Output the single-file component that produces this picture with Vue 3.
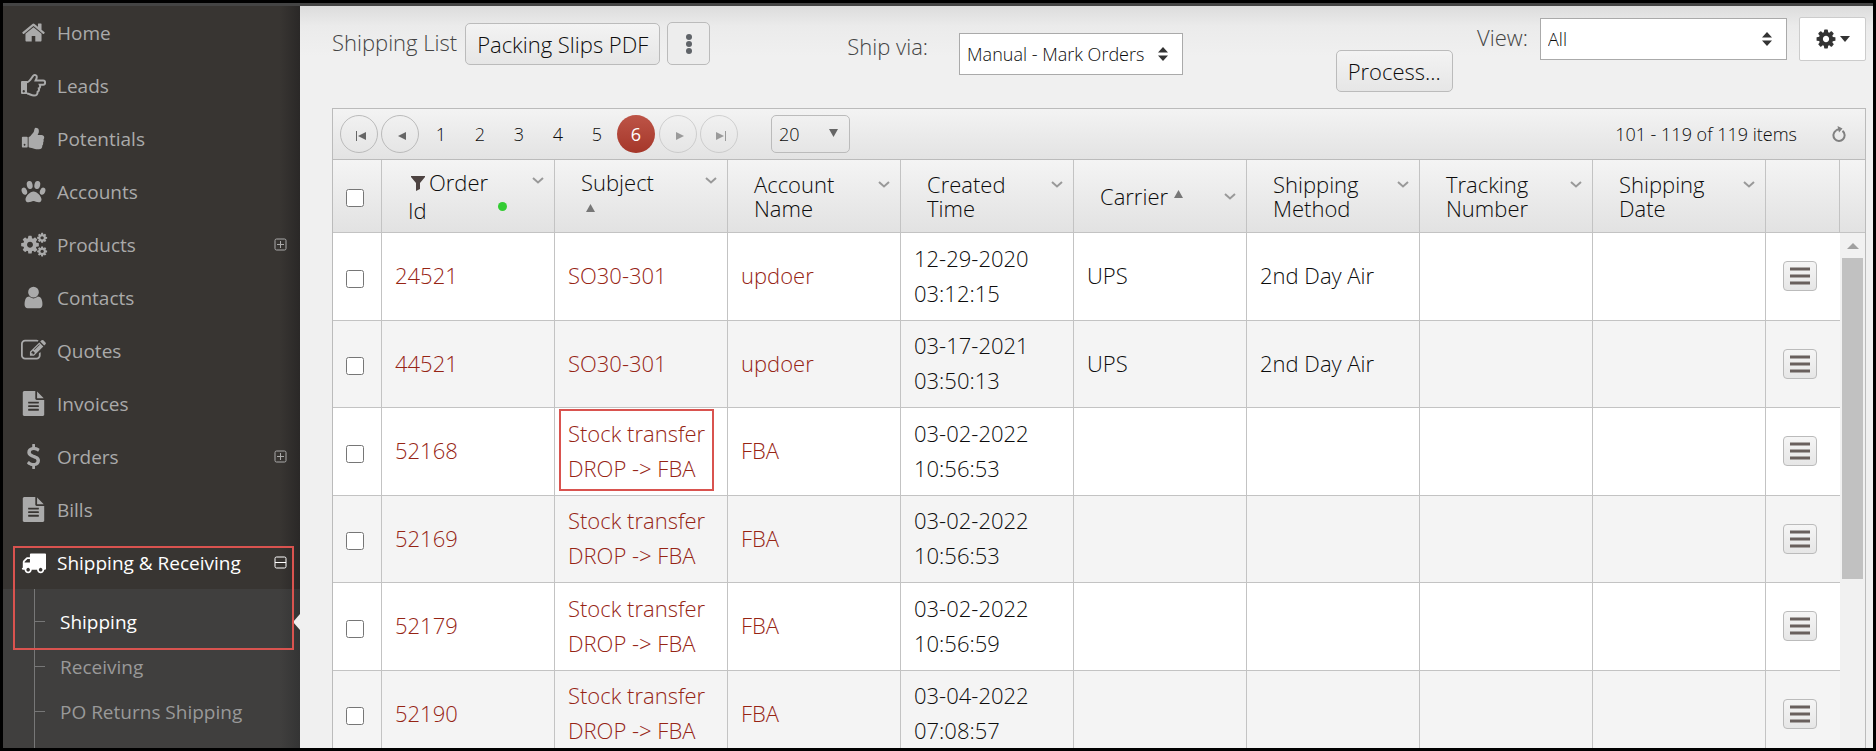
<script setup>
import { ref } from 'vue'

const icons = {
  home: 'M1472 992v480q0 26-19 45t-45 19h-384v-384h-256v384h-384q-26 0-45-19t-19-45v-480q0-1 .5-3t.5-3l575-474 575 474q1 2 1 6zm223-69l-62 74q-8 9-21 11h-3q-13 0-21-7l-692-577-692 577q-12 8-24 7-13-2-21-11l-62-74q-8-10-7-23.5t11-21.5l719-599q32-26 76-26t76 26l244 204v-195q0-14 9-23t23-9h192q14 0 23 9t9 23v408l219 182q10 8 11 21.5t-7 23.5z',
  thumb: 'M320 1344q0-26-19-45t-45-19q-27 0-45.5 19t-18.5 45q0 27 18.5 45.5t45.5 18.5q26 0 45-18.5t19-45.5zm160-512v640q0 26-19 45t-45 19h-288q-26 0-45-19t-19-45v-640q0-26 19-45t45-19h288q26 0 45 19t19 45zm1184 0q0 86-55 149 15 44 15 76 3 76-43 137 17 56 0 117-15 57-54 94 9 112-49 181-64 76-197 78h-129q-66 0-144-15.5t-121.5-29-120.5-39.5q-123-43-158-44-26-1-45-19.5t-19-44.5v-641q0-25 18-43.5t43-20.5q24-2 76-59t101-121q68-87 101-120 18-18 31-48t17.5-48.5 13.5-60.5q7-39 12.5-61t19.5-52 34-50q19-19 45-19 46 0 82.5 10.5t60 26 40 40.5 24 45 12 50 5 45 .5 39q0 38-9.5 76t-19 60-27.5 56q-3 6-10 18t-11 22-8 24h277q78 0 135 57t57 135z',
  user: 'M1536 1399q0 109-62.5 187t-150.5 78h-854q-88 0-150.5-78t-62.5-187q0-85 8.5-160.5t31.5-152 58.5-131 94-89 134.5-34.5q131 128 313 128t313-128q76 0 134.5 34.5t94 89 58.5 131 31.5 152 8.5 160.5zm-256-887q0 159-112.5 271.5t-271.5 112.5-271.5-112.5-112.5-271.5 112.5-271.5 271.5-112.5 271.5 112.5 112.5 271.5z',
  edit: 'M888 1184l116-116-152-152-116 116v56h96v96h56zm440-720q-16-16-33 1l-350 350q-17 17-1 33t33-1l350-350q17-17 1-33zm80 594v190q0 119-84.5 203.5t-203.5 84.5h-832q-119 0-203.5-84.5t-84.5-203.5v-832q0-119 84.5-203.5t203.5-84.5h832q63 0 117 25 15 7 18 23 3 17-9 29l-49 49q-14 14-32 8-23-6-45-6h-832q-66 0-113 47t-47 113v832q0 66 47 113t113 47h832q66 0 113-47t47-113v-126q0-13 9-22l64-64q15-15 35-7t20 29zm-96-738l288 288-672 672h-288v-288zm444 132l-92 92-288-288 92-92q28-28 68-28t68 28l152 152q28 28 28 68t-28 68z',
  file: 'M1596 476q14 14 28 36h-472v-472q22 14 36 28zm-476 164h544v1056q0 40-28 68t-68 28h-1344q-40 0-68-28t-28-68v-1600q0-40 28-68t68-28h800v544q0 40 28 68t68 28zm160 736v-64q0-14-9-23t-23-9h-704q-14 0-23 9t-9 23v64q0 14 9 23t23 9h704q14 0 23-9t9-23zm0-256v-64q0-14-9-23t-23-9h-704q-14 0-23 9t-9 23v64q0 14 9 23t23 9h704q14 0 23-9t9-23zm0-256v-64q0-14-9-23t-23-9h-704q-14 0-23 9t-9 23v64q0 14 9 23t23 9h704q14 0 23-9t9-23z',
  dollar: 'M1362 1185q0 153-99.5 263.5t-258.5 136.5v175q0 14-9 23t-23 9h-135q-13 0-22.5-9.5t-9.5-22.5v-175q-66-9-127.5-31t-101.5-44.5-74-48-46.5-37.5-17.5-18q-17-21-2-41l103-135q7-10 23-12 15-2 24 9l2 2q113 99 243 125 37 8 74 8 81 0 142.5-43t61.5-122q0-28-15-53t-33.5-42-58.5-37.5-66-32-80-32.5q-39-16-61.5-25t-61.5-26.5-62.5-31-56.5-35.5-53.5-42.5-43.5-49-35.5-58-21-66.5-8.5-78q0-138 98-242t255-134v-180q0-13 9.5-22.5t22.5-9.5h135q14 0 23 9t9 23v176q57 6 110.5 23t87 33.5 63.5 37.5 39 29 15 14q17 18 5 38l-81 146q-8 15-23 16-14 3-27-7-3-3-14.5-12t-39-26.5-58.5-32-74.5-26-85.5-11.5q-95 0-155 43t-60 111q0 26 8.5 48t29.5 41.5 39.5 33 56 31 60.5 27 70 27.5q53 20 81 31.5t76 35 75.5 42.5 62 50 53 63.5 31.5 76.5 13 94z',
  truck: 'M640 1408q0-52-38-90t-90-38-90 38-38 90 38 90 90 38 90-38 38-90zm-384-512h384v-256h-158q-13 0-22 9l-195 195q-9 9-9 22v30zm1280 512q0-52-38-90t-90-38-90 38-38 90 38 90 90 38 90-38 38-90zm256-1088v1024q0 15-4 26.5t-13.5 18.5-16.5 11.5-23.5 6-22.5 2-25.5 0-22.5-.5q0 106-75 181t-181 75-181-75-75-181h-384q0 106-75 181t-181 75-181-75-75-181h-64q-3 0-22.5.5t-25.5 0-22.5-2-23.5-6-16.5-11.5-13.5-18.5-4-26.5q0-26 19-45t45-19v-320q0-8-.5-35t0-38 2.5-34.5 6.5-37 14-30.5 22.5-30l198-198q19-19 50.5-32t58.5-13h160v-192q0-26 19-45t45-19h1024q26 0 45 19t19 45z',
  cog: 'M1152 896q0-106-75-181t-181-75-181 75-75 181 75 181 181 75 181-75 75-181zm512-109v222q0 12-8 23t-20 13l-185 28q-19 54-39 91 35 50 107 138 10 12 10 25t-9 23q-27 37-99 108t-94 71q-12 0-26-9l-138-108q-44 23-91 38-16 136-29 186-7 28-36 28h-222q-14 0-24.5-8.5t-11.5-21.5l-28-184q-49-16-90-37l-141 107q-10 9-25 9-14 0-25-11-126-114-165-168-7-10-7-23 0-12 8-23 15-21 51-66.5t54-70.5q-27-50-41-99l-183-27q-13-2-21-12.5t-8-23.5v-222q0-12 8-23t19-13l186-28q14-46 39-92-40-57-107-138-10-12-10-24 0-10 9-23 26-36 98.5-107.5t94.5-71.5q13 0 26 10l138 107q44-23 91-38 16-136 29-186 7-28 36-28h222q14 0 24.5 8.5t11.5 21.5l28 184q49 16 90 37l142-107q9-9 24-9 13 0 25 10 129 119 165 170 7 8 7 22 0 12-8 23-15 21-51 66.5t-54 70.5q26 50 41 98l183 28q13 2 21 12.5t8 23.5z',
}

const menu = [
  { label: 'Home', icon: 'home' },
  { label: 'Leads', icon: 'hand' },
  { label: 'Potentials', icon: 'thumb' },
  { label: 'Accounts', icon: 'paw' },
  { label: 'Products', icon: 'cogs', toggle: 'plus' },
  { label: 'Contacts', icon: 'user' },
  { label: 'Quotes', icon: 'edit' },
  { label: 'Invoices', icon: 'file' },
  { label: 'Orders', icon: 'dollar', toggle: 'plus' },
  { label: 'Bills', icon: 'file' },
  { label: 'Shipping & Receiving', icon: 'truck', toggle: 'minus', active: true },
]

const submenu = ['Shipping', 'Receiving', 'PO Returns Shipping']
const activeSub = ref('Shipping')

const columns = [
  { label: 'Order Id', filter: true },
  { label: 'Subject', sorted: true },
  { label: 'Account Name' },
  { label: 'Created Time' },
  { label: 'Carrier', sorted: true },
  { label: 'Shipping Method' },
  { label: 'Tracking Number' },
  { label: 'Shipping Date' },
]

const rows = [
  { id: '24521', subject: 'SO30-301', account: 'updoer', created: '12-29-2020 03:12:15', carrier: 'UPS', method: '2nd Day Air' },
  { id: '44521', subject: 'SO30-301', account: 'updoer', created: '03-17-2021 03:50:13', carrier: 'UPS', method: '2nd Day Air' },
  { id: '52168', subject: 'Stock transfer DROP -> FBA', account: 'FBA', created: '03-02-2022 10:56:53', marked: true },
  { id: '52169', subject: 'Stock transfer DROP -> FBA', account: 'FBA', created: '03-02-2022 10:56:53' },
  { id: '52179', subject: 'Stock transfer DROP -> FBA', account: 'FBA', created: '03-02-2022 10:56:59' },
  { id: '52190', subject: 'Stock transfer DROP -> FBA', account: 'FBA', created: '03-04-2022 07:08:57' },
]

const page = ref(6)
const selected = ref([])

function toggleAll(event) {
  selected.value = event.target.checked ? rows.map((row) => row.id) : []
}
</script>

<template>
  <div class="app">
    <nav class="sidebar">
      <ul class="menu">
        <li v-for="item in menu" :key="item.label">
          <a href="#" class="menu-link" :class="{ active: item.active }">
            <svg v-if="item.icon === 'hand'" class="menu-icon" viewBox="0 0 25 25">
              <path fill="currentColor" fill-rule="evenodd" d="M1 8h5v13H1a1 1 0 0 1-1-1V9a1 1 0 0 1 1-1zm1.700 9a1.200 1.200 0 1 0 .1 0z" />
              <path fill="none" stroke="currentColor" stroke-width="2" d="M6 9.200C9 9 10.500 4.500 12.600 2.400c1-1 3.200-.3 3.200 1.500 0 1.600-.9 2.700-1.200 3.500H22.300c2.400 0 2.400 4.400 0 4.400H18.800c.7 1.500.3 3-1 3.600.5 1.500 0 2.800-1.200 3.400.1 2.500-1 3.700-3.600 3.700-3 0-4.500-1.900-7-1.900" />
            </svg>
            <svg v-else-if="item.icon === 'paw'" class="menu-icon" viewBox="0 0 25 25" fill="currentColor">
              <ellipse cx="8.700" cy="6" rx="2.900" ry="4" transform="rotate(-12 8.700 6)" />
              <ellipse cx="16.300" cy="6" rx="2.900" ry="4" transform="rotate(12 16.300 6)" />
              <ellipse cx="3.400" cy="12.200" rx="2.600" ry="3.700" transform="rotate(-22 3.400 12.200)" />
              <ellipse cx="21.600" cy="12.200" rx="2.600" ry="3.700" transform="rotate(22 21.600 12.200)" />
              <path d="M12.500 12.500c3.500 0 8 4.800 8 8 0 2.200-1.400 2.800-3 2.800-2 0-3.200-1.300-5-1.300s-3 1.300-5 1.300c-1.600 0-3-.6-3-2.800 0-3.200 4.500-8 8-8z" />
            </svg>
            <svg v-else-if="item.icon === 'cogs'" class="menu-icon wide" viewBox="0 0 27 25" fill="currentColor">
              <path :d="icons.cog" transform="translate(-1.300 2.400) scale(0.0115)" />
              <path :d="icons.cog" transform="translate(15.300 0) scale(0.0065)" />
              <path :d="icons.cog" transform="translate(15.300 13.600) scale(0.0065)" />
            </svg>
            <svg v-else class="menu-icon" viewBox="0 0 1792 1792" fill="currentColor">
              <path :d="icons[item.icon]" />
            </svg>
            <span class="menu-label">{{ item.label }}</span>
            <svg v-if="item.toggle" class="menu-toggle" viewBox="0 0 13 13" fill="none" stroke="currentColor">
              <rect x="1" y="1" width="11" height="11" rx="1.500" />
              <path :d="item.toggle === 'plus' ? 'M3 6.500h7M6.500 3v7' : 'M1 6.500h11'" />
            </svg>
          </a>
        </li>
      </ul>
      <ul class="submenu">
        <li v-for="sub in submenu" :key="sub" :class="{ current: sub === activeSub }">
          <a href="#" @click.prevent="activeSub = sub">{{ sub }}</a>
        </li>
      </ul>
      <div class="mark mark-menu"></div>
    </nav>

    <main class="content">
      <header class="toolbar">
        <div class="group title-group">
          <span class="title">Shipping List</span>
          <button type="button" class="btn">Packing Slips PDF</button>
          <button type="button" class="btn btn-dots" aria-label="More">
            <svg width="6" height="20" viewBox="0 0 6 20" fill="#5f6368">
              <circle cx="3" cy="3" r="3" />
              <circle cx="3" cy="10" r="3" />
              <circle cx="3" cy="17" r="3" />
            </svg>
          </button>
        </div>
        <div class="group ship-group">
          <label for="ship-via">Ship via:</label>
          <div class="select-box ship-select">
            <select id="ship-via">
              <option>Manual - Mark Orders</option>
            </select>
            <svg class="updown" viewBox="0 0 10 14"><path d="M5 0l5 5.500H0zM5 14l5-5.500H0z" fill="#333" /></svg>
          </div>
        </div>
        <div class="group process-group">
          <button type="button" class="btn">Process...</button>
        </div>
        <div class="group view-group">
          <label for="view">View:</label>
          <div class="select-box view-select">
            <select id="view">
              <option>All</option>
            </select>
            <svg class="updown" viewBox="0 0 10 14"><path d="M5 0l5 5.500H0zM5 14l5-5.500H0z" fill="#333" /></svg>
          </div>
          <button type="button" class="btn-gear" aria-label="Settings">
            <svg width="22" height="22" viewBox="0 0 1792 1792" fill="#333"><path :d="icons.cog" /></svg>
            <svg width="10" height="6" viewBox="0 0 10 6" fill="#333"><path d="M0 0h10L5 6z" /></svg>
          </button>
        </div>
      </header>

      <section class="grid">
        <div class="pager">
          <button type="button" class="nav-btn" aria-label="First page">
            <svg width="10" height="10" viewBox="0 0 10 10" fill="#666"><path d="M0 0h1v10H0zM10 1v8L2 5z" /></svg>
          </button>
          <button type="button" class="nav-btn" aria-label="Previous page">
            <svg width="10" height="10" viewBox="0 0 10 10" fill="#666"><path d="M9 1v8L1 5z" /></svg>
          </button>
          <button
            v-for="n in 6"
            :key="n"
            type="button"
            class="page-btn"
            :class="{ current: n === page }"
            @click="page = n"
          >
            {{ n }}
          </button>
          <button type="button" class="nav-btn" disabled aria-label="Next page">
            <svg width="10" height="10" viewBox="0 0 10 10" fill="#666"><path d="M1 1v8l8-4z" /></svg>
          </button>
          <button type="button" class="nav-btn" disabled aria-label="Last page">
            <svg width="10" height="10" viewBox="0 0 10 10" fill="#666"><path d="M9 0h1v10H9zM0 1v8l8-4z" /></svg>
          </button>
          <div class="size-box">
            <select aria-label="Items per page">
              <option>20</option>
            </select>
            <svg class="size-arrow" viewBox="0 0 9 8"><path d="M0 0h9L4.500 8z" fill="#666" /></svg>
          </div>
          <span class="pager-info">101 - 119 of 119 items</span>
          <button type="button" class="refresh" aria-label="Refresh">
            <svg width="14" height="16" viewBox="0 0 14 16">
              <path d="M4 4.600A5.600 5.600 0 1 0 10.500 4.900" fill="none" stroke="#808080" stroke-width="2" />
              <path d="M5.500 0l5 2.500-3.500 4z" fill="#808080" />
              <path d="M4 4.600Q5 3.400 7.500 3.200" fill="none" stroke="#808080" stroke-width="2" />
            </svg>
          </button>
        </div>

        <div class="grid-body">
          <div class="table-wrap">
            <table>
              <colgroup>
                <col class="col-check" />
                <col v-for="col in columns" :key="col.label" />
                <col class="col-action" />
              </colgroup>
              <thead>
                <tr>
                  <th class="check">
                    <input type="checkbox" aria-label="Select all" @change="toggleAll" />
                  </th>
                  <th v-for="col in columns" :key="col.label">
                    <div class="head" :class="{ loose: col.filter || col.label === 'Subject' }">
                      <span class="head-label">
                        <svg v-if="col.filter" class="filter" viewBox="0 0 14 15" fill="#4d4341">
                          <path d="M0 0h14v1L9 7v6l-4 2V7L0 1z" />
                        </svg>{{ col.label }}
                        <svg v-if="col.sorted" class="sort" viewBox="0 0 9 8"><path d="M0 8h9L4.500 0z" fill="#777" /></svg>
                      </span>
                      <svg class="chevron" viewBox="0 0 12 7" fill="none" stroke="#999" stroke-width="2">
                        <path d="M1 1l5 4.500L11 1" />
                      </svg>
                      <span v-if="col.filter" class="dot"></span>
                    </div>
                  </th>
                  <th></th>
                </tr>
              </thead>
              <tbody>
                <tr v-for="row in rows" :key="row.id">
                  <td class="check">
                    <input v-model="selected" type="checkbox" :value="row.id" :aria-label="row.id" />
                  </td>
                  <td><a href="#">{{ row.id }}</a></td>
                  <td class="subject">
                    <a href="#">{{ row.subject }}</a>
                    <div v-if="row.marked" class="mark mark-cell"></div>
                  </td>
                  <td><a href="#">{{ row.account }}</a></td>
                  <td>{{ row.created }}</td>
                  <td>{{ row.carrier }}</td>
                  <td>{{ row.method }}</td>
                  <td></td>
                  <td></td>
                  <td class="action">
                    <button type="button" class="row-btn" aria-label="Row menu">
                      <svg width="20" height="18" viewBox="0 0 20 18" stroke="#69605d" stroke-width="3">
                        <path d="M0 2h20M0 9h20M0 16h20" />
                      </svg>
                    </button>
                  </td>
                </tr>
              </tbody>
            </table>
          </div>
          <div class="gutter">
            <div class="gutter-head"></div>
            <div class="track">
              <svg class="track-arrow" viewBox="0 0 12 6" fill="#a0a0a0"><path d="M6 0l6 6H0z" /></svg>
              <div class="thumb"></div>
            </div>
          </div>
        </div>
      </section>
    </main>
  </div>
</template>

<style>
body {
  margin: 0;
  background: #000;
}
</style>

<style scoped>
.app {
  display: flex;
  box-sizing: border-box;
  height: 100vh;
  border: 3px solid #000;
  overflow: hidden;
  font-family: 'Open Sans', 'Noto Sans', sans-serif;
  font-size: 22px;
  color: #0c0c0c;
  background: #efefef;
}

.app * {
  box-sizing: border-box;
}

button,
select {
  font-family: inherit;
  font-weight: inherit;
  color: inherit;
}

a {
  color: #962414;
  text-decoration: none;
}

/* sidebar */
.sidebar {
  position: relative;
  display: flex;
  flex-direction: column;
  flex: 0 0 297px;
  border-top: 3px solid #444;
  background: linear-gradient(to left, #2a2827, #383532 20px);
}

.menu,
.submenu {
  list-style: none;
  margin: 0;
  padding: 0;
}

.menu-link {
  display: flex;
  align-items: center;
  height: 53px;
  padding: 0 13px 0 18px;
  color: #aaa;
  font-size: 19px;
}

.menu-link.active {
  color: #fff;
}

.menu-icon {
  flex: none;
  width: 25px;
  height: 25px;
  margin-right: 11px;
}

.menu-icon.wide {
  width: 27px;
  margin-right: 9px;
}

.menu-label {
  flex: 1;
}

.menu-toggle {
  width: 13px;
  height: 13px;
}

.submenu {
  position: relative;
  flex: 1;
  padding-top: 10px;
  background: linear-gradient(to left, #343434, #403f3e 20px);
}

.submenu::before {
  content: '';
  position: absolute;
  top: 0;
  bottom: 0;
  left: 31px;
  width: 1px;
  background: #777;
}

.submenu li {
  position: relative;
  display: flex;
  align-items: center;
  height: 45px;
  padding-left: 57px;
}

.submenu li::before {
  content: '';
  position: absolute;
  left: 32px;
  width: 10px;
  height: 1px;
  background: #777;
}

.submenu li.current::after {
  content: '';
  position: absolute;
  right: 0;
  border: 8px solid transparent;
  border-right: 7px solid #efefef;
  border-left: 0;
}

.submenu a {
  color: #999;
  font-size: 19px;
}

.submenu .current a {
  color: #fff;
}

.mark {
  position: absolute;
  border: 2px solid #d9534f;
  pointer-events: none;
}

.mark-menu {
  top: 540px;
  left: 10px;
  right: 6px;
  height: 104px;
}

/* content */
.content {
  flex: 1;
  min-width: 0;
  padding: 0 7px 0 32px;
  border-top: 3px solid #444;
  background: linear-gradient(#dcdcdc, #ebebeb 20px, #f0f0f0 50px);
  font-weight: 300;
}

.toolbar {
  display: grid;
  grid-template-columns: 515fr 488fr 140fr 390fr;
  height: 102px;
}

.group {
  display: flex;
  align-items: flex-start;
  white-space: nowrap;
}

.group label,
.title {
  padding-bottom: 4px;
  color: #444;
  line-height: 26px;
}

.title-group {
  align-items: center;
  height: 43px;
  margin-top: 16px;
}

.title {
  margin-right: 8px;
}

.btn {
  height: 42px;
  padding: 0 11px;
  border: 1px solid #bbb;
  border-radius: 5px;
  background: linear-gradient(#f3f3f3, #e6e6e6);
  font-size: 22px;
}

.btn-dots {
  display: flex;
  align-items: center;
  justify-content: center;
  width: 43px;
  height: 43px;
  margin-left: 7px;
  padding: 0;
  background: #ededed;
}

.ship-group {
  padding-top: 27px;
}

.ship-group label {
  margin-right: 31px;
}

.process-group {
  padding-top: 44px;
}

.view-group {
  align-items: center;
  justify-content: flex-end;
  height: 44px;
  margin-top: 11px;
}

.view-group label {
  margin-right: 12px;
}

.select-box {
  position: relative;
  height: 42px;
  border: 1px solid #aaa;
  background: #fff;
}

.select-box select,
.size-box select {
  appearance: none;
  width: 100%;
  height: 100%;
  padding: 0 7px;
  border: 0;
  background: none;
  font-size: 18px;
}

.updown {
  position: absolute;
  top: 13px;
  right: 14px;
  width: 10px;
  height: 14px;
  pointer-events: none;
}

.ship-select {
  width: 224px;
}

.view-select {
  width: 247px;
}

.btn-gear {
  display: flex;
  align-items: center;
  justify-content: center;
  gap: 3px;
  width: 67px;
  height: 44px;
  margin-left: 12px;
  padding: 0;
  border: 1px solid #ccc;
  border-radius: 2px;
  background: #fff;
}

/* grid */
.grid {
  border: 1px solid #bbb;
}

.pager {
  display: flex;
  align-items: center;
  height: 50px;
  padding: 0 19px 0 7px;
  background: linear-gradient(#f3f3f3, #e3e3e3);
  font-size: 18px;
}

.nav-btn,
.page-btn {
  display: flex;
  align-items: center;
  justify-content: center;
  width: 38px;
  height: 38px;
  margin-right: 3px;
  padding: 0;
  border: 1px solid #bbb;
  border-radius: 50%;
  background: none;
  font-size: 18px;
}

.nav-btn {
  padding: 3px 0 0 4px;
}

.nav-btn:disabled {
  opacity: 0.6;
}

.page-btn {
  margin-right: 1px;
  border: 0;
}

.page-btn.current {
  margin-right: 4px;
  background: linear-gradient(#bd5447, #a5372a);
  color: #fff;
  font-weight: 400;
}

.size-box {
  position: relative;
  width: 79px;
  height: 38px;
  margin-left: 30px;
  border: 1px solid #bbb;
  border-radius: 5px;
}

.size-arrow {
  position: absolute;
  top: 13px;
  right: 11px;
  width: 9px;
  height: 8px;
  pointer-events: none;
}

.pager-info {
  margin-left: auto;
}

.refresh {
  display: flex;
  margin-left: 35px;
  padding: 0;
  border: 0;
  background: none;
}

.grid-body {
  display: flex;
  border-top: 1px solid #bbb;
}

.table-wrap {
  flex: 1;
  min-width: 0;
}

table {
  width: 100%;
  table-layout: fixed;
  border-collapse: separate;
  border-spacing: 0;
}

.col-check {
  width: 49px;
}

.col-action {
  width: 74px;
}

th,
td {
  padding: 0;
  border-right: 1px solid #c3c3c3;
  border-bottom: 1px solid #c3c3c3;
  text-align: left;
}

th {
  height: 73px;
  background: linear-gradient(#f4f4f4, #e2e2e2);
  font-weight: inherit;
}

td {
  height: 88px;
  padding: 0 12px 2px 13px;
  background: #fff;
  line-height: 35px;
}

tr:nth-child(even) td {
  height: 87px;
  background: #f4f4f4;
}

td:last-child {
  border-right: 0;
}

th.check,
td.check {
  padding: 4px 0 0 13px;
}

.check input {
  display: block;
  width: 18px;
  height: 18px;
  margin: 0;
}

.subject {
  position: relative;
}

.mark-cell {
  top: 1px;
  left: 4px;
  right: 13px;
  height: 82px;
}

.head {
  position: relative;
  display: flex;
  align-items: flex-start;
  justify-content: space-between;
  padding: 0 10px 0 26px;
  line-height: 24px;
}

.head-label {
  max-width: 104px;
}

.head.loose {
  line-height: 28px;
}

.loose .head-label {
  max-width: 88px;
}

.filter {
  width: 14px;
  height: 15px;
  margin: 0 4px 0 3px;
}

.sort {
  width: 9px;
  height: 8px;
  vertical-align: 7px;
}

.loose .sort {
  margin-left: 5px;
}

.chevron {
  flex: none;
  width: 12px;
  height: 7px;
  margin-top: 9px;
}

.dot {
  position: absolute;
  right: 47px;
  bottom: 13px;
  width: 9px;
  height: 9px;
  border-radius: 50%;
  background: #3c3;
}

td.action {
  padding: 0 0 1px 17px;
}

.row-btn {
  display: flex;
  align-items: center;
  justify-content: center;
  width: 34px;
  height: 30px;
  padding: 0;
  border: 1px solid #bbb;
  border-radius: 4px;
  background: linear-gradient(#f5f5f5, #e6e6e6);
}

.gutter {
  display: flex;
  flex-direction: column;
  flex: 0 0 25px;
}

.gutter-head {
  height: 73px;
  border-bottom: 1px solid #c3c3c3;
  background: linear-gradient(#f4f4f4, #e2e2e2);
}

.track {
  flex: 1;
  padding: 0 2px;
  background: #f1f1f1;
}

.track-arrow {
  display: block;
  width: 12px;
  height: 6px;
  margin: 10px auto 9px;
}

.thumb {
  height: 321px;
  background: #c1c1c1;
}
</style>
